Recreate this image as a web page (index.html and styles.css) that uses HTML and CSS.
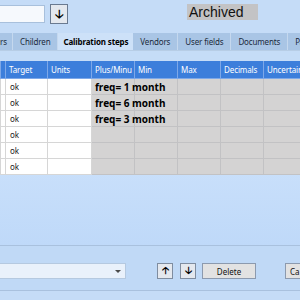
FILE: index.html
```html
<!DOCTYPE html>
<html lang="en">
<head>
<meta charset="UTF-8">
<title>Calibration steps</title>
<link rel="stylesheet" href="styles.css">
</head>
<body>
    <div class="window">
        <!-- Top row: name box and archived flag -->
        <div class="top-row">
            <div class="name-box"></div>
            <button class="icon-btn big-btn">&#129123;</button>
            <div class="archived">Archived</div>
        </div>

        <!-- Tabs -->
        <div class="tabs">
            <span class="tab first">rs</span>
            <span class="tab">Children</span>
            <span class="tab active">Calibration steps</span>
            <span class="tab">Vendors</span>
            <span class="tab">User fields</span>
            <span class="tab">Documents</span>
            <span class="tab">Pa</span>
        </div>

        <!-- Steps grid -->
        <div class="grid-area">
            <table class="steps">
                <colgroup>
                    <col style="width: 5px">
                    <col style="width: 42px">
                    <col style="width: 44px">
                    <col style="width: 43px">
                    <col style="width: 43px">
                    <col style="width: 43px">
                    <col style="width: 43px">
                    <col style="width: 43px">
                </colgroup>
                <thead>
                    <tr>
                        <th></th>
                        <th>Target</th>
                        <th>Units</th>
                        <th>Plus/Minu</th>
                        <th>Min</th>
                        <th>Max</th>
                        <th>Decimals</th>
                        <th>Uncertain</th>
                    </tr>
                </thead>
                <tbody>
                    <tr><td></td><td>ok</td><td></td><td class="off"><span class="freq">freq= 1 month</span></td><td class="off"></td><td class="off"></td><td class="off"></td><td class="off"></td></tr>
                    <tr><td></td><td>ok</td><td></td><td class="off"><span class="freq">freq= 6 month</span></td><td class="off"></td><td class="off"></td><td class="off"></td><td class="off"></td></tr>
                    <tr><td></td><td>ok</td><td></td><td class="off"><span class="freq">freq= 3 month</span></td><td class="off"></td><td class="off"></td><td class="off"></td><td class="off"></td></tr>
                    <tr><td></td><td>ok</td><td></td><td class="off"></td><td class="off"></td><td class="off"></td><td class="off"></td><td class="off"></td></tr>
                    <tr><td></td><td>ok</td><td></td><td class="off"></td><td class="off"></td><td class="off"></td><td class="off"></td><td class="off"></td></tr>
                    <tr><td></td><td>ok</td><td></td><td class="off"></td><td class="off"></td><td class="off"></td><td class="off"></td><td class="off"></td></tr>
                </tbody>
            </table>
            <div class="grid-fill"></div>
        </div>

        <!-- Bottom toolbar -->
        <div class="toolbar">
            <div class="combo"><span class="caret"></span></div>
            <button class="icon-btn up">&#129121;</button>
            <button class="icon-btn down">&#129123;</button>
            <button class="btn delete">Delete</button>
            <button class="btn cancel">Ca</button>
        </div>
        <div class="bottom"></div>
    </div>
</body>
</html>
```

FILE: styles.css
```css
/* Basic page */
body, html {
    margin: 0;
    height: 100%;
    background: #c5dcf7;
    font-family: 'Noto Sans', 'DejaVu Sans', sans-serif;
    overflow: hidden;
}

.window {
    width: 300px;
    height: 300px;
    display: flex;
    flex-direction: column;
    overflow: hidden;
}

/* Top row */
.top-row {
    height: 33px;
    flex-shrink: 0;
    display: flex;
    align-items: flex-start;
    padding-top: 4px;
    box-sizing: border-box;
}

.name-box {
    width: 45px;
    height: 18px;
    margin-top: 1px;
    background: #f6f9fd;
    border: 1px solid #a8c0dc;
    border-left: none;
    box-sizing: border-box;
}

.icon-btn {
    flex-shrink: 0;
    padding: 0;
    border: 1px solid #7f8da0;
    background: #e4e8ee;
    color: #000;
    font-family: 'DejaVu Sans', sans-serif;
    font-size: 11px;
    font-weight: bold;
    line-height: 1;
    display: flex;
    align-items: center;
    justify-content: center;
}

.big-btn {
    width: 18px;
    height: 20px;
    margin-left: 5px;
    border-color: #6a7a90;
    font-size: 12px;
}

.archived {
    margin-left: 119px;
    width: 71px;
    height: 16px;
    background: #c3c3c5;
    font-family: 'Liberation Sans', Arial, sans-serif;
    font-size: 14px;
    line-height: 16px;
    padding-left: 2px;
    box-sizing: border-box;
    color: #111;
}

/* Tabs */
.tabs {
    height: 17px;
    flex-shrink: 0;
    display: flex;
    background: #a9c5e5;
    border-bottom: 1px solid #b7cde6;
    font-size: 8px;
    letter-spacing: -0.15px;
    color: #1b2a3c;
    white-space: nowrap;
    overflow: hidden;
}

.tab {
    flex-shrink: 0;
    display: flex;
    align-items: center;
    padding: 0 7px;
    border-right: 1px solid #c5d8ee;
}

.tab.first {
    padding: 0;
    width: 12px;
}

.tab.active {
    background: #cde1f8;
    font-weight: bold;
    color: #000;
    padding: 0 5px;
    border-right: none;
}

/* Grid */
.grid-area {
    margin-top: 10px;
    height: 184px;
    flex-shrink: 0;
    display: flex;
    flex-direction: column;
    background: linear-gradient(#d6e8fd, #bfd9f9);
    border-bottom: 1px solid #a9c1de;
    overflow: hidden;
}

.steps {
    border-collapse: collapse;
    table-layout: fixed;
    width: 306px;
    font-size: 8px;
    letter-spacing: -0.1px;
}

.steps th {
    height: 17px;
    background: #3c7edb;
    color: #fff;
    font-weight: normal;
    text-align: left;
    padding: 0 0 0 3px;
    border: 1px solid #7ea8e8;
    border-top: none;
    white-space: nowrap;
    overflow: hidden;
}

.steps td {
    height: 15px;
    background: #fff;
    border: 1px solid #d6d6d6;
    padding: 0 0 0 4px;
    color: #222;
    white-space: nowrap;
    overflow: visible;
}

.steps td:first-child {
    padding: 0;
}

.steps td.off {
    background: #d4d3d3;
    border-color: #c2c2c4;
    padding-left: 3px;
}

.freq {
    font-weight: bold;
    font-size: 10px;
    letter-spacing: 0;
    color: #000;
    position: relative;
    z-index: 1;
}

.grid-fill {
    flex: 1;
}

/* Bottom toolbar */
.toolbar {
    height: 45px;
    flex-shrink: 0;
    display: flex;
    align-items: center;
    padding-top: 6px;
    box-sizing: border-box;
    border-bottom: 1px solid #a9c1de;
    background: #c0d9f6;
}

.combo {
    flex-shrink: 0;
    width: 126px;
    height: 16px;
    background: #e9f1fb;
    border: 1px solid #b5c9e0;
    border-left: none;
    box-sizing: border-box;
    display: flex;
    justify-content: flex-end;
    align-items: center;
    padding-right: 4px;
}

.caret {
    width: 0;
    height: 0;
    border-left: 3px solid transparent;
    border-right: 3px solid transparent;
    border-top: 3px solid #4a4a4a;
}

.toolbar .icon-btn {
    width: 16px;
    height: 16px;
    font-size: 10px;
}

.up {
    margin-left: 31px;
}

.down {
    margin-left: 7px;
}

.btn {
    flex-shrink: 0;
    height: 16px;
    padding: 0;
    border: 1px solid #8c9aae;
    background: #e2e2e2;
    font-family: 'Noto Sans', sans-serif;
    font-size: 8px;
    color: #111;
}

.delete {
    width: 54px;
    margin-left: 6px;
}

.cancel {
    margin-left: 29px;
    width: 30px;
    text-align: left;
    padding-left: 4px;
}

.bottom {
    flex: 1;
    background: #c5dcf7;
}
```
